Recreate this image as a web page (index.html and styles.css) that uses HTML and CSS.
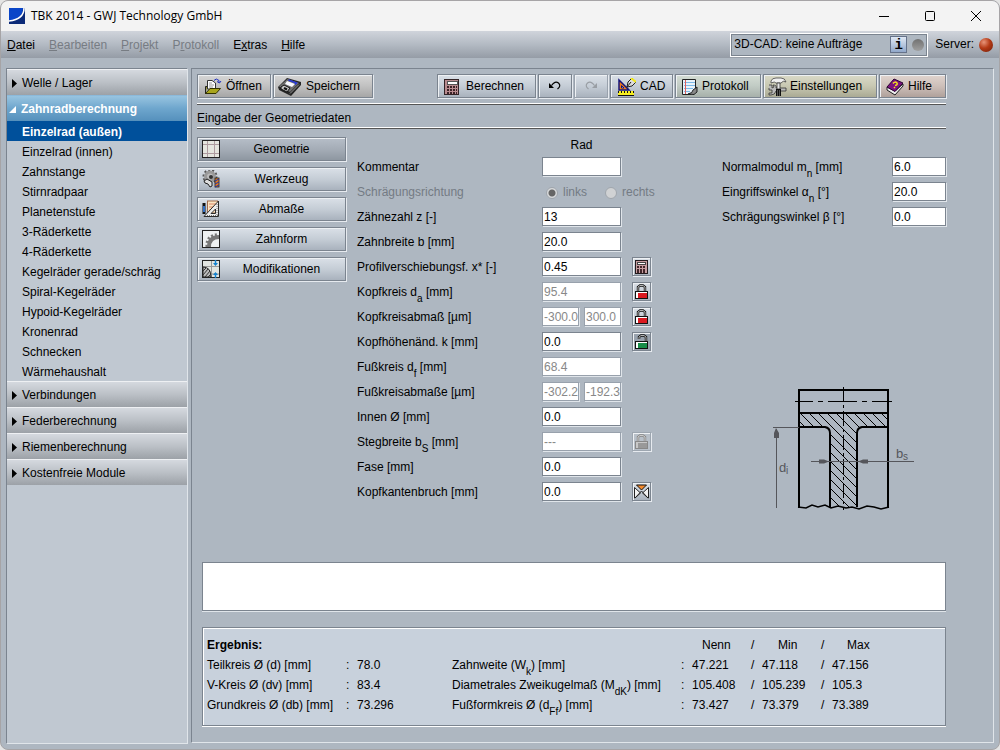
FILE: index.html
```html
<!DOCTYPE html>
<html lang="de">
<head>
<meta charset="utf-8">
<title>TBK 2014 - GWJ Technology GmbH</title>
<link rel="stylesheet" href="styles.css">
</head>
<body>
<div class="window">
  <header class="titlebar">
    <svg class="logo" width="16" height="16" viewBox="0 0 16 16"><rect width="16" height="16" fill="#0b2a78"/><path d="M0 0H14C14 8 8 12 0 13Z" fill="#0a45c8"/><path d="M15 0C15 8 9 12 0 13" fill="none" stroke="#fff" stroke-width="1.6"/></svg>
    <span class="title">TBK 2014 - GWJ Technology GmbH</span>
    <button class="caption" aria-label="Minimieren"><svg width="12" height="12"><path d="M1 6.500H11" stroke="#000"/></svg></button>
    <button class="caption" aria-label="Maximieren"><svg width="12" height="12"><rect x="1.500" y="1.500" width="9" height="9" rx="1" fill="none" stroke="#000"/></svg></button>
    <button class="caption" aria-label="Schließen"><svg width="12" height="12"><path d="M1 1L11 11M11 1L1 11" stroke="#000"/></svg></button>
  </header>

  <div class="menubar">
    <nav class="menu">
      <button><u>D</u>atei</button>
      <button disabled><u>B</u>earbeiten</button>
      <button disabled><u>P</u>rojekt</button>
      <button disabled>P<u>r</u>otokoll</button>
      <button>E<u>x</u>tras</button>
      <button><u>H</u>ilfe</button>
    </nav>
    <div class="jobs">
      <span class="jobs-text">3D-CAD: keine Aufträge</span>
      <button class="info" aria-label="Info">i</button>
      <span class="led led-off"></span>
    </div>
    <span class="server">Server:</span>
    <span class="led led-red"></span>
  </div>

  <div class="body">
    <nav class="sidebar">
      <button class="section"><svg width="6" height="9"><path d="M0 0L5 4.500L0 9Z"/></svg>Welle / Lager</button>
      <button class="section open"><svg width="8" height="8"><path d="M7 0V7H0Z"/></svg>Zahnradberechnung</button>
      <ul class="modules">
        <li><a class="active" href="#">Einzelrad (außen)</a></li>
        <li><a href="#">Einzelrad (innen)</a></li>
        <li><a href="#">Zahnstange</a></li>
        <li><a href="#">Stirnradpaar</a></li>
        <li><a href="#">Planetenstufe</a></li>
        <li><a href="#">3-Räderkette</a></li>
        <li><a href="#">4-Räderkette</a></li>
        <li><a href="#">Kegelräder gerade/schräg</a></li>
        <li><a href="#">Spiral-Kegelräder</a></li>
        <li><a href="#">Hypoid-Kegelräder</a></li>
        <li><a href="#">Kronenrad</a></li>
        <li><a href="#">Schnecken</a></li>
        <li><a href="#">Wärmehaushalt</a></li>
      </ul>
      <button class="section"><svg width="6" height="9"><path d="M0 0L5 4.500L0 9Z"/></svg>Verbindungen</button>
      <button class="section"><svg width="6" height="9"><path d="M0 0L5 4.500L0 9Z"/></svg>Federberechnung</button>
      <button class="section"><svg width="6" height="9"><path d="M0 0L5 4.500L0 9Z"/></svg>Riemenberechnung</button>
      <button class="section"><svg width="6" height="9"><path d="M0 0L5 4.500L0 9Z"/></svg>Kostenfreie Module</button>
    </nav>

    <main class="panel">
      <div class="toolbar">
        <button class="btn tool gray w-open"><svg width="18" height="18" viewBox="0 0 18 18"><path d="M3.500 2.500H8L11.500 5V11H3.500Z" fill="#fff" stroke="#333"/><path d="M5 5H8M5 7H10M5 9H9" stroke="#999"/><path d="M1.500 16V8.500H3" fill="#888000" stroke="#222"/><path d="M1.500 15.500L6 10.500H16.500L12 15.500Z" fill="#a9a51c" stroke="#333300"/><path d="M10 2.500Q12 -.5 15 2.500V5M13 3.500L15.500 5L17 3" fill="none" stroke="#2030c0"/></svg>Öffnen</button>
        <button class="btn tool gray w-save"><svg width="24" height="18" viewBox="0 0 24 18"><path d="M0 9L9 0L23 4V7L13 18L9 16L1 12Z" fill="#262626"/><path d="M1 8.500L9.500 1L21 5L12 14Z" fill="#6f6f6f"/><path d="M9 3L17 6L14 9L7 6Z" fill="#f8f8ff"/><path d="M10.500 2L18.500 5L17 6.500" fill="none" stroke="#2638d8" stroke-width="1.600"/><path d="M3 9L6 7L12 10L9 14L3 11Z" fill="#c4c4c4" stroke="#111"/><path d="M6 10L9 11.500" stroke="#111" stroke-width="2"/><path d="M12 15.500L21 6.500" stroke="#9a9a9a"/></svg>Speichern</button>
        <span class="spacer"></span>
        <button class="btn tool blue w-calc"><svg width="16" height="18" viewBox="0 0 16 18" shape-rendering="crispEdges"><rect x=".5" y="1.500" width="14" height="15" fill="#b98b8f" stroke="#332326"/><rect x="3" y="3" width="10" height="3" fill="#fff" stroke="#555"/><path d="M3 8.500H13M3 11.500H13M3 14.500H13" stroke="#3b2226" stroke-width="2" stroke-dasharray="2 1"/></svg>Berechnen</button>
        <button class="btn tool blue w-arrow" aria-label="Rückgängig"><svg width="14" height="10" viewBox="0 0 14 10"><path d="M1 2V7H6Z"/><path d="M3.500 4.500Q7 -.5 10.500 2Q13.500 5 9.500 8" fill="none" stroke="#000" stroke-width="1.200"/></svg></button>
        <button class="btn tool blue w-arrow" aria-label="Wiederholen" disabled><svg width="14" height="10" viewBox="0 0 14 10"><path d="M13 2V7H8Z" fill="#999ea4"/><path d="M10.500 4.500Q7 -.5 3.500 2Q.5 5 4.500 8" fill="none" stroke="#999ea4" stroke-width="1.200"/></svg></button>
        <button class="btn tool blue w-cad"><svg width="19" height="18" viewBox="0 0 19 18"><path d="M2 2V12H12Z" fill="#f07818" stroke="#16167a" stroke-width="1.500"/><path d="M4.500 7.500V10H7Z" fill="#d8dfe8" stroke="#16167a"/><path d="M10 9L11 4L15 0L19 4L15 8Z" fill="#ddd" stroke="#222"/><path d="M10 9L14 4" stroke="#222"/><path d="M14 0L19 4" stroke="#f3ea16" stroke-width="2"/><rect x="1" y="13" width="16" height="4.500" fill="#f6ee20"/><path d="M1 14H17" stroke="#111" stroke-width="2" stroke-dasharray="1 2"/><path d="M1 17.500H17" stroke="#111"/></svg>CAD</button>
        <button class="btn tool green w-prot"><svg width="17" height="18" viewBox="0 0 17 18"><path d="M1.500 1.500H14.500V11L10 16.500H1.500Z" fill="#e8f2fa" stroke="#222"/><path d="M3 4.500H14M3 7.500H14M3 10.500H12M3 13.500H9" stroke="#7cb8e6"/><path d="M4.500 2V16" stroke="#e06060"/><path d="M7 16Q12 15 12 12L16 9V14L13 16.500Z" fill="#888" stroke="#222"/></svg>Protokoll</button>
        <button class="btn tool olive w-conf"><svg width="20" height="20" viewBox="0 0 20 20"><path d="M1 8H4V11L6 10L5 8Q9 8 8 11H18V14H8Q7 18 3 18H1V16H4V13H1V11" fill="#bbb" stroke="#333" stroke-width=".8"/><path d="M3 6V4Q4 1 8 1H13Q17 1 18 5Q15 3 13 6H8Q7 4 3 6Z" fill="#f0f0f0" stroke="#444" stroke-width=".8"/><path d="M9 6H12V12H9Z" fill="#e6e6e6" stroke="#333" stroke-width=".8"/><path d="M8 12H13V19H8Z" fill="#111"/><path d="M9 14H12M9 16H12M9 18H12" stroke="#999" stroke-dasharray="1 1"/></svg>Einstellungen</button>
        <button class="btn tool rose w-help"><svg width="18" height="18" viewBox="0 0 18 18"><path d="M1 9V12L9 17L17 8V6L9 13Z" fill="#eee" stroke="#222"/><path d="M1 9L8 1L17 5L9 13.500Z" fill="#7d127f" stroke="#2b0430"/><path d="M7 5.500Q9 3 11 5Q12 7 9 7.500M8 9L9 10" fill="none" stroke="#f5e51b" stroke-width="1.500"/></svg>Hilfe</button>
      </div>
      <h1 class="heading">Eingabe der Geometriedaten</h1>

      <div class="workspace">
        <div class="tabs">
          <button class="btn tab current"><svg width="18" height="18" viewBox="0 0 18 18" shape-rendering="crispEdges"><rect x=".5" y=".5" width="17" height="17" fill="#e5e6df" stroke="#222"/><path d="M5.500 1V17M12.500 1V17M1 4.500H17M1 13.500H17" stroke="#ae9ca0"/></svg><span>Geometrie</span></button>
          <button class="btn tab"><svg width="18" height="18" viewBox="0 0 18 18"><circle cx="8" cy="6.500" r="6.500" fill="none" stroke="#555" stroke-width="2" stroke-dasharray="2 2"/><circle cx="8" cy="6.500" r="4.500" fill="#bbb" stroke="#999" stroke-width="3"/><circle cx="9" cy="7" r="2" fill="#333"/><path d="M2 11L5 9L10 12V16L8 17L6 14L3 13Z" fill="#ddd" stroke="#222"/><rect x="13" y="8" width="4" height="9" fill="#e07a20" stroke="#222" stroke-width=".8"/><path d="M13 11L17 9M13 14L17 12M13 17L17 15" stroke="#2036aa"/></svg><span>Werkzeug</span></button>
          <button class="btn tab"><svg width="18" height="18" viewBox="0 0 18 18"><rect x="5.500" y="1" width="10" height="12" fill="#fae5c3" stroke="#a36c4b"/><path d="M7 4H14M7 7H14M7 10H14" stroke="#d98468"/><path d="M16.500 1V16.500H2L16.500 1ZM13.500 9V13.500H9Z" fill="#eee" fill-rule="evenodd" stroke="#2c2c2c"/><path d="M15 4V16M5 15.500H16" stroke="#777" stroke-dasharray="1 1"/><path d="M2 3V14" stroke="#111" stroke-width="3"/><path d="M2 6V12" stroke="#316fc6" stroke-width="2"/></svg><span>Abmaße</span></button>
          <button class="btn tab"><svg width="18" height="18" viewBox="0 0 18 18"><rect x=".5" y=".5" width="17" height="17" fill="#eef1f2" stroke="#222"/><path d="M7 17Q7 7 17 7" fill="none" stroke="#777" stroke-width="4"/><path d="M5 17Q4 5 17 4.500" fill="none" stroke="#777" stroke-width="3" stroke-dasharray="2 2"/></svg><span>Zahnform</span></button>
          <button class="btn tab"><svg width="18" height="18" viewBox="0 0 18 18"><rect x=".5" y=".5" width="17" height="17" fill="#e2e5e2" stroke="#222"/><path d="M1 6.500H17M9.500 1V17" stroke="#999"/><path d="M1 7Q9 7 9 17H1Z" fill="#bbb" stroke="#222"/><path d="M1 11L4 8M1 15L6 9M3 17L8 11M6 17L9 14" stroke="#333"/><path d="M10 14H17" stroke="#888"/><path d="M11 3H16L13.500 6ZM11 15L13.500 12L16 15Z" fill="#1682cf"/><path d="M13.500 0V5M13.500 13V18" stroke="#1682cf" stroke-width="1.500"/></svg><span>Modifikationen</span></button>
        </div>

        <form class="form">
          <div class="row head"><span></span><span class="col-title">Rad</span></div>
          <div class="row"><label for="f1">Kommentar</label><input id="f1" type="text"></div>
          <div class="row off"><span class="name">Schrägungsrichtung</span>
            <div class="radios">
              <label><input type="radio" name="dir" checked disabled>links</label>
              <label><input type="radio" name="dir" disabled>rechts</label>
            </div>
          </div>
          <div class="row"><label for="f2">Zähnezahl z [-]</label><input id="f2" type="text" value="13"></div>
          <div class="row"><label for="f3">Zahnbreite b [mm]</label><input id="f3" type="text" value="20.0"></div>
          <div class="row"><label for="f4">Profilverschiebungsf. x* [-]</label><input id="f4" type="text" value="0.45"><button type="button" class="btn mini" aria-label="Berechnen"><svg width="13" height="14" viewBox="0 0 13 14" shape-rendering="crispEdges"><rect x=".5" y=".5" width="12" height="13" fill="#c79da0" stroke="#221a1c"/><rect x="2.500" y="2.500" width="8" height="2" fill="#fff" stroke="#444"/><path d="M2 7H11M2 9.500H11M2 12H11" stroke="#402529" stroke-width="2" stroke-dasharray="2 1"/></svg></button></div>
          <div class="row"><label for="f5">Kopfkreis d<sub>a</sub> [mm]</label><input id="f5" type="text" value="95.4" disabled><button type="button" class="btn mini" aria-label="Gesperrt"><svg width="13" height="15" viewBox="0 0 13 15"><path d="M3 8V3L5 1.500H8L10 3V8" fill="none" stroke="#111" stroke-width="2.400"/><path d="M3 8V3L5 1.500H8L10 3V8" fill="none" stroke="#ddd" stroke-width=".8"/><rect x=".5" y="7.500" width="12" height="7" fill="#fff" stroke="#111"/><rect x="3" y="9" width="9" height="5" fill="#da1920"/></svg></button></div>
          <div class="row"><label for="f6">Kopfkreisabmaß [µm]</label><div class="pair"><input id="f6" type="text" value="-300.0" disabled><input type="text" value="300.0" aria-label="Kopfkreisabmaß oben" disabled></div><button type="button" class="btn mini" aria-label="Gesperrt"><svg width="13" height="15" viewBox="0 0 13 15"><path d="M3 8V3L5 1.500H8L10 3V8" fill="none" stroke="#111" stroke-width="2.400"/><path d="M3 8V3L5 1.500H8L10 3V8" fill="none" stroke="#ddd" stroke-width=".8"/><rect x=".5" y="7.500" width="12" height="7" fill="#fff" stroke="#111"/><rect x="3" y="9" width="9" height="5" fill="#da1920"/></svg></button></div>
          <div class="row"><label for="f7">Kopfhöhenänd. k [mm]</label><input id="f7" type="text" value="0.0"><button type="button" class="btn mini pressed" aria-label="Entsperrt"><svg width="13" height="15" viewBox="0 0 13 15"><path d="M4 5V3L6 1.500H9L11 3V8" fill="none" stroke="#111" stroke-width="2.400"/><path d="M4 5V3L6 1.500H9L11 3V8" fill="none" stroke="#ddd" stroke-width=".8"/><rect x=".5" y="7.500" width="12" height="7" fill="#fff" stroke="#111"/><rect x="3" y="9" width="9" height="5" fill="#178d49"/></svg></button></div>
          <div class="row"><label for="f8">Fußkreis d<sub>f</sub> [mm]</label><input id="f8" type="text" value="68.4" disabled></div>
          <div class="row"><label for="f9">Fußkreisabmaße [µm]</label><div class="pair"><input id="f9" type="text" value="-302.2" disabled><input type="text" value="-192.3" aria-label="Fußkreisabmaß oben" disabled></div></div>
          <div class="row"><label for="f10">Innen Ø [mm]</label><input id="f10" type="text" value="0.0"></div>
          <div class="row"><label for="f11">Stegbreite b<sub>S</sub> [mm]</label><input id="f11" type="text" value="---" disabled><button type="button" class="btn mini" aria-label="Gesperrt" disabled><svg width="13" height="15" viewBox="0 0 13 15"><path d="M3 8V3L5 1.500H8L10 3V8" fill="none" stroke="#858585" stroke-width="2.400"/><path d="M3 8V3L5 1.500H8L10 3V8" fill="none" stroke="#ddd" stroke-width=".8"/><rect x=".5" y="7.500" width="12" height="7" fill="#c8c8c8" stroke="#888"/><rect x="3" y="9" width="9" height="5" fill="#999"/></svg></button></div>
          <div class="row"><label for="f12">Fase [mm]</label><input id="f12" type="text" value="0.0"></div>
          <div class="row"><label for="f13">Kopfkantenbruch [mm]</label><input id="f13" type="text" value="0.0"><button type="button" class="btn mini" aria-label="Kantenbruch"><svg width="15" height="15" viewBox="0 0 15 15"><path d="M2.500 1H12.500L7.500 6Z" fill="#f58a2c" stroke="#111"/><path d="M.5 3.500V14H1L6.500 9Z" fill="#f3f3f3" stroke="#222"/><path d="M14.500 3.500V14H14L8.500 9Z" fill="#f3f3f3" stroke="#222"/><path d="M1 14L7.500 7L14 14" fill="none" stroke="#222"/></svg></button></div>
        </form>

        <div class="aside">
          <div class="basic">
            <div class="row"><label for="g1">Normalmodul m<sub>n</sub> [mm]</label><input id="g1" type="text" value="6.0"></div>
            <div class="row"><label for="g2">Eingriffswinkel α<sub>n</sub> [°]</label><input id="g2" type="text" value="20.0"></div>
            <div class="row"><label for="g3">Schrägungswinkel β [°]</label><input id="g3" type="text" value="0.0"></div>
          </div>
          <svg class="sketch" width="144" height="126" viewBox="772 386 144 126">
            <defs><pattern id="hatch" width="9" height="9" patternUnits="userSpaceOnUse"><path d="M-1 -1L10 10M-1 8L1 10M8 -1L10 1" stroke="#000" stroke-width="1"/></pattern></defs>
            <path d="M799 414H888V427H862Q857 427 857 432V507H830V432Q830 427 825 427H799Z" fill="url(#hatch)"/>
            <g fill="none" stroke="#000" stroke-width="2"><path d="M799 508V390H888V508"/><path d="M799 413H888M799 427H825Q830 428 830 433V507M888 427H862Q857 428 857 433V507"/></g>
            <path d="M798 507L806 508L812 505L818 507L825 505L831 508L838 506L846 508L852 507L859 509L867 506L874 507L881 509L889 507" fill="none" stroke="#000" stroke-width="1.500"/>
            <path d="M795 401.500H892" stroke="#000" stroke-dasharray="18 5 5 5 29 5 5 5 20" fill="none"/>
            <path d="M843.500 387V510" stroke="#000" stroke-dasharray="15 3 3 3" fill="none"/>
            <g fill="none" stroke="#55565b"><path d="M773 427.500H799M776.500 429V508M811 461.500H914"/></g>
            <path d="M776 428L779 433V438H774V433ZM829 461.500L824 463.500H819V459.500H824ZM858 461.500L863 463.500H868V459.500H863Z" fill="#55565b"/>
            <text class="dim" x="779" y="472">d</text><text class="dim small" x="786" y="474">i</text>
            <text class="dim" x="896" y="458">b</text><text class="dim small" x="903" y="460">s</text>
          </svg>
        </div>
      </div>

      <textarea class="message" aria-label="Meldungen" readonly></textarea>

      <section class="results">
        <table>
          <colgroup><col class="c-name"><col class="c-sep"><col class="c-val"><col class="c-name2"><col class="c-sep"><col class="c-num"><col class="c-sep"><col class="c-num"><col class="c-sep"><col></colgroup>
          <thead><tr><th class="caption-cell" colspan="5">Ergebnis:</th><th class="h-nenn">Nenn</th><th>/</th><th class="h-min">Min</th><th>/</th><th class="h-max">Max</th></tr></thead>
          <tbody>
            <tr><td>Teilkreis Ø (d) [mm]</td><td>:</td><td>78.0</td><td>Zahnweite (W<sub>k</sub>) [mm]</td><td>:</td><td>47.221</td><td>/</td><td>47.118</td><td>/</td><td>47.156</td></tr>
            <tr><td>V-Kreis Ø (dv) [mm]</td><td>:</td><td>83.4</td><td>Diametrales Zweikugelmaß (M<sub>dK</sub>) [mm]</td><td>:</td><td>105.408</td><td>/</td><td>105.239</td><td>/</td><td>105.3</td></tr>
            <tr><td>Grundkreis Ø (db) [mm]</td><td>:</td><td>73.296</td><td>Fußformkreis Ø (d<sub>Ff</sub>) [mm]</td><td>:</td><td>73.427</td><td>/</td><td>73.379</td><td>/</td><td>73.389</td></tr>
          </tbody>
        </table>
      </section>
    </main>
  </div>
</div>
</body>
</html>
```
FILE: styles.css
```css
* { box-sizing: border-box; }
body {
  margin: 0;
  background: #e4e4e4;
  font: 12px/15px "Liberation Sans", Arial, sans-serif;
  color: #000;
}
button, input, textarea { font: inherit; color: inherit; margin: 0; }
button { cursor: pointer; }
svg { flex: none; }

.window {
  display: flex;
  flex-direction: column;
  min-height: 100vh;
  border: 1px solid #a6a4a6;
  border-radius: 8px;
  overflow: hidden;
  background: #aeb7c1;
}

.titlebar {
  display: flex;
  align-items: center;
  height: 30px;
  padding-left: 8px;
  background: #f3f3f3;
}
.title {
  flex: 1;
  padding-left: 6px;
  font: 12px/16px "Open Sans", "Noto Sans", sans-serif;
}
.caption {
  display: flex;
  align-items: center;
  justify-content: center;
  width: 46px;
  height: 30px;
  padding: 0;
  border: 0;
  background: none;
}

.menubar {
  display: flex;
  align-items: center;
  height: 27px;
  padding: 0 6px 0 6px;
  background: linear-gradient(#d0d4db, #b3bac3 50%, #959ca6);
}
.menu { display: flex; gap: 14px; flex: 1; }
.menu button { padding: 2px 0 0; border: 0; background: none; }
.menu button:disabled { color: #777c83; }
.jobs {
  display: flex;
  align-items: center;
  width: 198px;
  height: 24px;
  padding: 0 3px;
  border: 1px solid #fff;
  outline: 1px solid #7b848f;
  outline-offset: -2px;
  background: #aeb7c1;
}
.jobs-text { flex: 1; }
.info {
  width: 17px;
  height: 17px;
  margin-right: 5px;
  padding: 0;
  border: 1px solid #66738a;
  background: linear-gradient(#dfe8f4, #91a8ca);
  font: bold 14px/14px "Liberation Mono", monospace;
}
.led { width: 12px; height: 12px; border-radius: 50%; }
.led-off { background: linear-gradient(#717171, #a0a0a0); }
.led-red {
  width: 14px;
  height: 14px;
  background: radial-gradient(circle at 35% 30%, #e8957a, #b43a16 45%, #6e1d08);
}
.server { padding: 0 5px 0 7px; }

.body { display: flex; flex: 1; gap: 4px; padding: 10px 5px 6px; }

.sidebar {
  width: 181px;
  border: 1px solid #7b848f;
  border-width: 1px 0 0 1px;
  box-shadow: 1px 1px 0 #e0e5ea;
  background: #c0c8d1;
}
.section {
  display: flex;
  align-items: center;
  gap: 4px;
  width: 100%;
  height: 26px;
  padding: 2px 0 0 5px;
  border: 0;
  border-top: 1px solid #eef0f3;
  background: linear-gradient(#d5d9df, #bbc0c6 50%, #9ca1a7);
  text-align: left;
}
.section.open {
  padding-left: 2px;
  border-top-color: #8bb9da;
  background: linear-gradient(#98c4e0, #6ea6cd 50%, #5590bc);
  color: #fff;
  fill: #fff;
  font-weight: bold;
}
.modules { margin: 0; padding: 0; list-style: none; }
.modules a {
  display: block;
  height: 20px;
  padding: 1px 0 0 15px;
  color: inherit;
  line-height: 20px;
  text-decoration: none;
}
.modules .active { background: #00509b; color: #fff; font-weight: bold; }

.panel {
  display: flex;
  flex: 1;
  flex-direction: column;
  min-width: 0;
  padding: 5px 47px 16px 5px;
  border: 1px solid #7b848f;
  border-right-color: #e0e5ea;
  border-bottom-color: #e0e5ea;
}

.btn {
  display: flex;
  align-items: center;
  padding: 0;
  border: 1px solid #7b848f;
  box-shadow: 1px 1px 0 #e6eaef, inset 1px 1px 0 #eef1f4;
  background: linear-gradient(#dae0e7, #c5cdd6 50%, #a9b2bd);
}
.toolbar { display: flex; gap: 2px; padding-bottom: 6px; }
.spacer { flex: 1; }
.tool { height: 24px; padding: 1px 0 0 6px; gap: 6px; white-space: nowrap; }
.gray { background: linear-gradient(#d6d6d6, #c1c1c1 50%, #a6a6a6); }
.green { background: linear-gradient(#d5ddd5, #c1cbc4 50%, #a7b0aa); }
.olive { background: linear-gradient(#dadac8, #c8c8b2 50%, #aaaa94); }
.rose { background: linear-gradient(#e0d4ce, #cdbfb9 50%, #b0a19b); }
.w-open { width: 74px; gap: 4px; }
.w-save { width: 100px; padding-left: 4px; gap: 4px; }
.w-calc { width: 99px; }
.w-arrow { width: 34px; padding: 0; justify-content: center; }
.w-cad { width: 63px; gap: 4px; }
.w-prot { width: 86px; gap: 4px; padding-left: 5px; }
.w-conf { width: 114px; padding-left: 4px; gap: 2px; }
.w-help { width: 67px; gap: 4px; }
.tool:disabled { border-color: #98a1ac; }

.heading {
  margin: 0;
  padding: 5px 0 2px;
  border: solid #555;
  border-width: 1px 0;
  box-shadow: 0 -1px 0 #fff, inset 0 -1px 0 #fff;
  font-size: 12px;
  font-weight: normal;
  line-height: 16px;
}

.workspace { display: flex; flex: 1; gap: 11px; padding-top: 8px; }
.tabs { display: flex; flex-direction: column; gap: 6px; width: 149px; }
.tab { height: 24px; padding: 0 0 0 4px; }
.tab span { flex: 1; padding: 1px 2px 0 0; text-align: center; }
.current { background: linear-gradient(#b6bec8, #a5adb7 50%, #8e97a1); }

.row { display: grid; grid-template-columns: 185px 79px 19px; align-items: center; height: 25px; }
.row .mini { margin-left: 11px; }
.row > label, .row > .name, .radios { padding-top: 2px; }
.head { height: 17px; }
.col-title { text-align: center; }
.off { color: #747b84; }
.radios { display: flex; grid-column: 2 / 4; gap: 18px; padding-left: 4px; white-space: nowrap; }
.radios label { display: flex; align-items: center; gap: 5px; }
.radios input {
  appearance: none;
  width: 12px;
  height: 12px;
  border: 1px solid #a0a6ad;
  border-radius: 50%;
  background: #d0d2d4;
}
.radios input:checked { background: radial-gradient(circle, #666 0 3px, #d8dadc 4px); }
input[type="text"] {
  width: 100%;
  min-width: 0;
  height: 19px;
  padding: 1px 0 0 1px;
  border: 1px solid #7b848f;
  border-radius: 0;
  box-shadow: 1px 1px 0 #e0e5ea;
  background: #fff;
}
input[type="text"]:disabled { border-color: #98a1ac; color: #888; }
.pair { display: grid; grid-template-columns: 1fr 1fr; gap: 5px; }
.mini { justify-content: center; width: 19px; height: 19px; }
.pressed { background: #98a2ae; }
.mini:disabled { border-color: #9da6b0; background: #b8c0c9; }
sub { font-size: 10px; line-height: 0; vertical-align: -6px; }

.aside { display: flex; flex-direction: column; width: 224px; margin-left: auto; }
.basic { padding-top: 17px; }
.basic .row { grid-template-columns: 1fr 54px; }
.sketch { margin: 157px 0 0 50px; }
.dim { fill: #55565b; font-size: 13px; }
.small { font-size: 10px; }

.message {
  display: block;
  height: 49px;
  margin-left: 5px;
  border: 1px solid #7b848f;
  border-radius: 0;
  box-shadow: 0 1px 0 #e0e5ea;
  background: #fff;
  resize: none;
}
.results {
  margin: 16px 0 0 5px;
  padding: 7px 4px 10px;
  border: 1px solid #7b848f;
  box-shadow: 0 1px 0 #fff, inset 1px 1px 0 #fff;
  background: #c8d1dc;
}
.results table { width: 100%; border-collapse: collapse; table-layout: fixed; }
.results td, .results th { height: 20px; padding: 0; font-weight: normal; text-align: left; white-space: nowrap; }
.results .caption-cell { font-weight: bold; }
.results .h-nenn { padding-left: 10px; }
.results .h-min { padding-left: 16px; }
.results .h-max { padding-left: 15px; }
.c-name { width: 139px; }
.c-sep { width: 11px; }
.c-val { width: 95px; }
.c-name2 { width: 229px; }
.c-num { width: 59px; }
```
